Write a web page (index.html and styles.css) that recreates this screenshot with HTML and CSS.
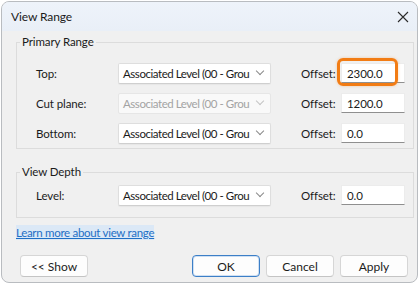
FILE: index.html
```html
<!DOCTYPE html>
<html lang="en">
<head>
    <meta charset="UTF-8">
    <title>View Range</title>
    <link rel="stylesheet" href="styles.css">
</head>
<body>
    <div class="window">
        <div class="titlebar">
            <span class="title">View Range</span>
            <svg class="close" width="12" height="12" viewBox="0 0 12 12">
                <path d="M1 1L11 11M11 1L1 11" stroke="#2b2b2b" stroke-width="1.1" fill="none"/>
            </svg>
        </div>
        <div class="content">
            <fieldset class="group">
                <legend>Primary Range</legend>
                <div class="row">
                    <span class="label">Top:</span>
                    <div class="select"><span class="value">Associated Level (00 - Grou</span><i class="chev"></i></div>
                    <span></span>
                    <span class="label">Offset:</span>
                    <div class="field focused"><span>2300.0</span><div class="ring"></div></div>
                </div>
                <div class="row">
                    <span class="label">Cut plane:</span>
                    <div class="select disabled"><span class="value">Associated Level (00 - Grou</span><i class="chev"></i></div>
                    <span></span>
                    <span class="label">Offset:</span>
                    <div class="field"><span>1200.0</span></div>
                </div>
                <div class="row">
                    <span class="label">Bottom:</span>
                    <div class="select"><span class="value">Associated Level (00 - Grou</span><i class="chev"></i></div>
                    <span></span>
                    <span class="label">Offset:</span>
                    <div class="field"><span>0.0</span></div>
                </div>
            </fieldset>

            <fieldset class="group depth">
                <legend>View Depth</legend>
                <div class="row">
                    <span class="label">Level:</span>
                    <div class="select"><span class="value">Associated Level (00 - Grou</span><i class="chev"></i></div>
                    <span></span>
                    <span class="label">Offset:</span>
                    <div class="field"><span>0.0</span></div>
                </div>
            </fieldset>

            <a class="link" href="#">Learn more about view range</a>

            <div class="buttons">
                <button class="btn">&lt;&lt; Show</button>
                <span class="spacer"></span>
                <button class="btn primary">OK</button>
                <button class="btn">Cancel</button>
                <button class="btn">Apply</button>
            </div>
        </div>
    </div>
</body>
</html>
```

FILE: styles.css
```css
body {
    margin: 0;
    padding: 1px 0 0 1px;
    background: #ffffff;
    font-family: Lato, "Segoe UI", Arial, sans-serif;
    font-size: 11.5px;
    letter-spacing: -0.1px;
    color: #1b1b1b;
}

.window {
    width: 417px;
    height: 282px;
    border: 1px solid #b9bcc0;
    border-radius: 8px;
    background: #f0f0f0;
    overflow: hidden;
    box-sizing: border-box;
}

.titlebar {
    height: 29px;
    display: flex;
    align-items: center;
    justify-content: space-between;
    padding: 0 8px 0 9px;
    background: linear-gradient(#eef3fa, #e9eff7);
}

.title {
    font-size: 12px;
    color: #1b1b1b;
}

.close {
    display: block;
    margin-top: 1px;
}

.content {
    padding: 3px 3px 0 14px;
}

.group {
    margin: 0;
    padding: 8px 8px 0 19px;
    border: 1px solid #dcdcdc;
    border-radius: 0;
    min-width: 0;
}

.group legend {
    margin-left: -16px;
    padding: 0 2px;
    line-height: 16px;
}

.group.depth {
    margin-top: 15px;
    padding-top: 0;
    padding-bottom: 7px;
}

.row {
    display: grid;
    grid-template-columns: 82px 153px 30px 40px 64px;
    align-items: center;
    height: 30px;
}

.label {
    white-space: nowrap;
}

.select {
    height: 21px;
    box-sizing: border-box;
    display: flex;
    align-items: center;
    justify-content: space-between;
    padding: 0 7px 0 4px;
    background: #ffffff;
    border: 1px solid #dedede;
    border-bottom-color: #cfcfcf;
    border-radius: 2px;
    box-shadow: 0 1px 1px rgba(0, 0, 0, 0.04);
    white-space: nowrap;
}

.select .value {
    letter-spacing: -0.45px;
    min-width: 0;
}

.select.disabled {
    background: #f9f9f9;
    color: #a3a3a3;
    border-color: #e6e6e6;
    box-shadow: none;
}

.chev {
    width: 5px;
    height: 5px;
    border-right: 1px solid #8a8a8a;
    border-bottom: 1px solid #8a8a8a;
    transform: rotate(45deg);
    margin: -4px 0 0 4px;
    flex: none;
}

.select.disabled .chev {
    border-color: #c4c4c4;
}

.field {
    position: relative;
    height: 20px;
    box-sizing: border-box;
    display: flex;
    align-items: center;
    padding-left: 5px;
    background: #ffffff;
    border: 1px solid #ececec;
    border-bottom-color: #8f8f8f;
}

.ring {
    position: absolute;
    left: -5px;
    top: -6px;
    width: 55px;
    height: 22px;
    border: 3px solid #f27c14;
    border-radius: 6px;
    box-shadow: 0 0 3px rgba(242, 124, 20, 0.35);
}

.link {
    display: inline-block;
    margin-top: 7px;
    line-height: 15px;
    letter-spacing: -0.3px;
    color: #1f6fc5;
    background: #dbe8f6;
    text-decoration: underline;
}

.buttons {
    display: flex;
    gap: 6px;
    margin-top: 15px;
    padding-left: 4px;
}

.spacer {
    flex: 1;
}

.btn {
    width: 68px;
    height: 22px;
    margin: 0;
    padding: 0;
    font-family: inherit;
    font-size: 12px;
    color: #1b1b1b;
    background: #fdfdfd;
    border: 1px solid #d6d6d6;
    border-bottom-color: #c4c4c4;
    border-radius: 4px;
}

.btn.primary {
    border: 1px solid #3c7fc7;
    box-shadow: inset 0 0 0 1px #cfe0f3;
}

.btn:last-child {
    margin-right: 6px;
}
```
